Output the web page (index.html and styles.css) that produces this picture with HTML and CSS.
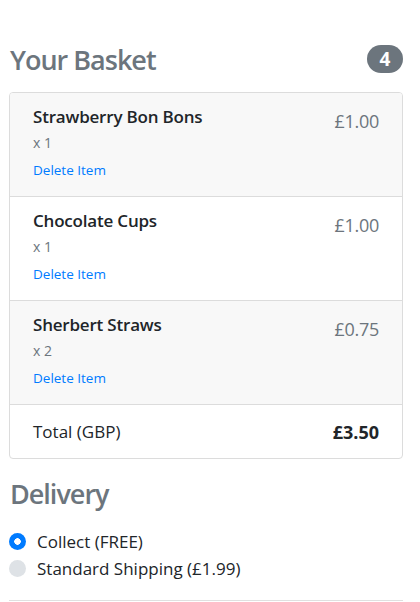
FILE: index.html
```html
<!DOCTYPE html>
<html>
<head>
<meta charset="utf-8">
<link rel="stylesheet" href="styles.css">
</head>
<body>
<div class="page">
  <div class="basket-head">
    <h4 class="title">Your Basket</h4>
    <span class="badge">4</span>
  </div>
  <ul class="list">
    <li class="item alt">
      <div class="info">
        <h6 class="name">Strawberry Bon Bons</h6>
        <div class="qty">x 1</div>
        <a class="del" href="#">Delete Item</a>
      </div>
      <span class="price">£1.00</span>
    </li>
    <li class="item">
      <div class="info">
        <h6 class="name">Chocolate Cups</h6>
        <div class="qty">x 1</div>
        <a class="del" href="#">Delete Item</a>
      </div>
      <span class="price">£1.00</span>
    </li>
    <li class="item alt">
      <div class="info">
        <h6 class="name">Sherbert Straws</h6>
        <div class="qty">x 2</div>
        <a class="del" href="#">Delete Item</a>
      </div>
      <span class="price">£0.75</span>
    </li>
    <li class="total">
      <span>Total (GBP)</span>
      <strong>£3.50</strong>
    </li>
  </ul>
  <h4 class="title delivery">Delivery</h4>
  <div class="radios">
    <label class="radio"><span class="dot checked"></span>Collect (FREE)</label>
    <label class="radio"><span class="dot"></span>Standard Shipping (£1.99)</label>
  </div>
  <hr class="rule">
</div>
</body>
</html>
```
FILE: styles.css
```css
* { box-sizing: border-box; }
html, body { margin: 0; padding: 0; background: #fff; }
body {
  font-family: "Open Sans", "Noto Sans", sans-serif;
  color: #212529;
  font-size: 17px;
}
.page { padding: 40px 17px 0 9px; }
.basket-head {
  display: flex;
  align-items: center;
  justify-content: space-between;
  height: 38px;
  margin-bottom: 14px;
}
.title {
  margin: 0;
  font-size: 27px;
  font-weight: 600;
  color: #6c757d;
  padding-left: 1px;
  letter-spacing: -1px;
}
.badge {
  background: #6c757d;
  color: #fff;
  font-weight: 700;
  font-size: 19px;
  width: 36px;
  height: 28px;
  border-radius: 14px;
  display: flex;
  align-items: center;
  justify-content: center;
}
.list {
  list-style: none;
  margin: 0;
  padding: 0;
  border: 1px solid #dcdcdc;
  border-radius: 4px;
  overflow: hidden;
}
.item {
  display: flex;
  justify-content: space-between;
  align-items: flex-start;
  padding: 12px 23px 0 23px;
  height: 104px;
  border-bottom: 1px solid #dcdcdc;
  background: #fff;
}
.item.alt { background: #f8f8f8; }
.name {
  margin: 0;
  font-size: 17px;
  font-weight: 600;
  line-height: 24px;
  letter-spacing: -0.2px;
}
.qty {
  font-size: 14px;
  color: #6c757d;
  line-height: 18px;
  margin-top: 5px;
}
.del {
  display: block;
  font-size: 13.5px;
  color: #007bff;
  text-decoration: none;
  line-height: 18px;
  margin-top: 9px;
}
.price {
  font-size: 18px;
  color: #6c757d;
  line-height: 24px;
  margin-top: 4px;
  letter-spacing: -0.3px;
}
.total {
  display: flex;
  justify-content: space-between;
  align-items: center;
  height: 53px;
  padding: 0 23px;
  font-size: 17px;
}
.total strong { font-weight: 700; font-size: 18px; }
.delivery { margin-top: 16px; height: 38px; line-height: 38px; }
.radios { margin-top: 15px; }
.radio {
  display: flex;
  align-items: center;
  gap: 11px;
  height: 27px;
  font-size: 17px;
}
.dot {
  width: 17px;
  height: 17px;
  border-radius: 50%;
  background: #dee2e6;
  flex: none;
}
.dot.checked {
  background: radial-gradient(circle, #fff 0 3px, #007bff 3.5px);
}
.rule {
  border: 0;
  border-top: 1px solid #e0e0e0;
  margin: 18px 0 0 0;
}
```
